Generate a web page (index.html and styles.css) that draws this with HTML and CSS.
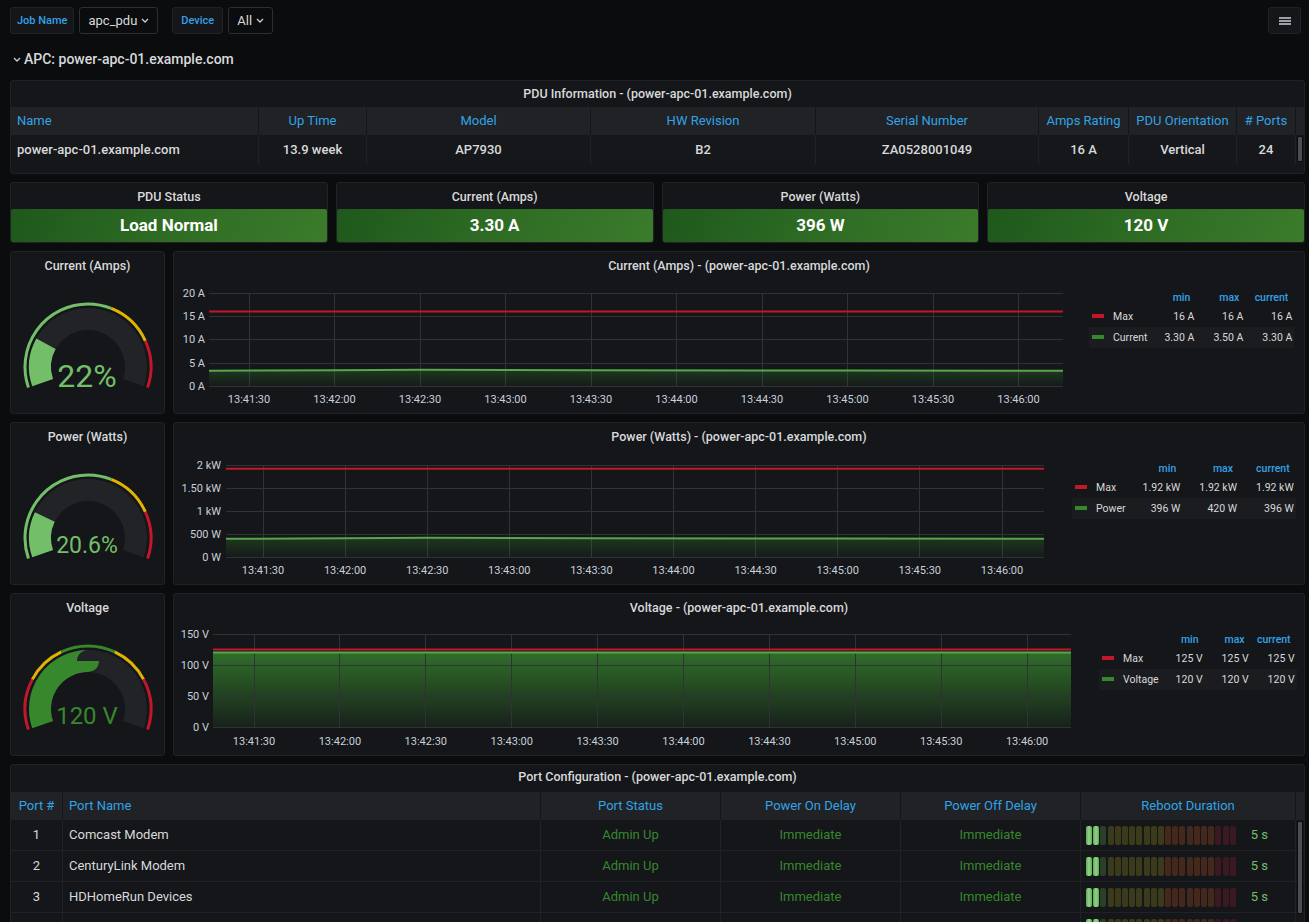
FILE: index.html
```html
<!DOCTYPE html>
<html lang="en">
<head>
<meta charset="utf-8">
<title>APC PDU</title>
<link rel="stylesheet" href="styles.css">
</head>
<body>
<div class="page">
  <div class="topbar">
    <div class="vars">
      <div class="var"><span class="var-label">Job Name</span><span class="var-value">apc_pdu <svg class="chev" width="8" height="5" viewBox="0 0 8 5"><path d="M1 1l3 3 3-3"/></svg></span></div>
      <div class="var"><span class="var-label wide">Device</span><span class="var-value">All <svg class="chev" width="8" height="5" viewBox="0 0 8 5"><path d="M1 1l3 3 3-3"/></svg></span></div>
    </div>
    <div class="menu-btn"><svg width="12" height="8" viewBox="0 0 12 8"><path d="M0 1h12M0 4h12M0 7h12"/></svg></div>
  </div>

  <div class="row-title"><svg class="chev" width="8" height="5" viewBox="0 0 8 5"><path d="M1 1l3 3 3-3"/></svg>APC: power-apc-01.example.com</div>

  <div class="panel info">
    <div class="panel-title t26">PDU Information - (power-apc-01.example.com)</div>
    <div class="tbl">
      <div class="tr th">
        <div class="c w-name left">Name</div>
        <div class="c w-up">Up Time</div>
        <div class="c w-model">Model</div>
        <div class="c w-hw">HW Revision</div>
        <div class="c w-serial">Serial Number</div>
        <div class="c w-amps">Amps Rating</div>
        <div class="c w-orient">PDU Orientation</div>
        <div class="c w-ports"># Ports</div>
      </div>
      <div class="tr td bold">
        <div class="c w-name left">power-apc-01.example.com</div>
        <div class="c w-up">13.9 week</div>
        <div class="c w-model">AP7930</div>
        <div class="c w-hw">B2</div>
        <div class="c w-serial">ZA0528001049</div>
        <div class="c w-amps">16 A</div>
        <div class="c w-orient">Vertical</div>
        <div class="c w-ports">24</div>
        <div class="scroll s1"></div>
      </div>
    </div>
  </div>

  <div class="stats">
    <div class="panel stat"><div class="stat-title">PDU Status</div><div class="stat-box">Load Normal</div></div>
    <div class="panel stat"><div class="stat-title">Current (Amps)</div><div class="stat-box">3.30 A</div></div>
    <div class="panel stat"><div class="stat-title">Power (Watts)</div><div class="stat-box">396 W</div></div>
    <div class="panel stat"><div class="stat-title">Voltage</div><div class="stat-box">120 V</div></div>
  </div>

  <!-- Current row -->
  <div class="metric-row">
    <div class="panel gauge-panel">
      <div class="panel-title">Current (Amps)</div>
      <svg class="gauge" width="153" height="134" viewBox="0 0 153 134">
        <path class="track" d="M31.62 103.63 A48 48 0 1 1 122.38 103.63"/>
        <path class="gfill light" pathLength="100" stroke-dasharray="22 300" d="M31.62 103.63 A48 48 0 1 1 122.38 103.63"/>
        <path class="ring" stroke="#73bf69" pathLength="100" stroke-dasharray="60 300" d="M17.43 108.51 A63 63 0 1 1 136.57 108.51"/>
        <path class="ring" stroke="#e0b400" pathLength="100" stroke-dasharray="0 60 20 300" d="M17.43 108.51 A63 63 0 1 1 136.57 108.51"/>
        <path class="ring" stroke="#c4162a" pathLength="100" stroke-dasharray="0 80 20 300" d="M17.43 108.51 A63 63 0 1 1 136.57 108.51"/>
        <text class="gval light-t" x="76" y="108" font-size="32">22%</text>
      </svg>
    </div>
    <div class="panel graph-panel">
      <div class="panel-title">Current (Amps) - (power-apc-01.example.com)</div>
      <div class="graph-body">
        <svg class="chart" width="915" height="134" viewBox="0 0 915 134">
          <defs>
            <linearGradient id="gf1" x1="0" y1="0" x2="0" y2="1"><stop offset="0" stop-color="#37872d" stop-opacity="0.3"/><stop offset="1" stop-color="#37872d" stop-opacity="0.04"/></linearGradient>
          </defs>
          <g class="grid">
            <path d="M35 14.5H889M35 37.5H889M35 60.5H889M35 84.5H889M35 107.5H889"/>
            <path d="M75.5 14V107M160.5 14V107M246.5 14V107M331.5 14V107M417.5 14V107M502.5 14V107M588.5 14V107M673.5 14V107M759.5 14V107M844.5 14V107"/>
          </g>
          <g class="ylab">
            <text x="31" y="18">20 A</text><text x="31" y="41">15 A</text><text x="31" y="64">10 A</text><text x="31" y="88">5 A</text><text x="31" y="111">0 A</text>
          </g>
          <polygon fill="url(#gf1)" points="35,91.7 160,91.2 246,90.8 417,91.2 673,91.5 889,91.7 889,107 35,107"/>
          <polyline class="s-green" points="35,91.7 160,91.2 246,90.8 417,91.2 673,91.5 889,91.7"/>
          <line class="s-red" x1="35" x2="889" y1="32.6" y2="32.6"/>
          <g class="xlab">
            <text x="75" y="124">13:41:30</text><text x="160.5" y="124">13:42:00</text><text x="246" y="124">13:42:30</text><text x="331.5" y="124">13:43:00</text><text x="417" y="124">13:43:30</text><text x="502.5" y="124">13:44:00</text><text x="588" y="124">13:44:30</text><text x="673.5" y="124">13:45:00</text><text x="759" y="124">13:45:30</text><text x="844.5" y="124">13:46:00</text>
          </g>
        </svg>
        <table class="legend">
          <tr class="lh"><th></th><th>min</th><th>max</th><th>current</th></tr>
          <tr><td class="ln"><i class="sw red"></i>Max</td><td>16 A</td><td>16 A</td><td>16 A</td></tr>
          <tr class="alt"><td class="ln"><i class="sw green"></i>Current</td><td>3.30 A</td><td>3.50 A</td><td>3.30 A</td></tr>
        </table>
      </div>
    </div>
  </div>

  <!-- Power row -->
  <div class="metric-row">
    <div class="panel gauge-panel">
      <div class="panel-title">Power (Watts)</div>
      <svg class="gauge" width="153" height="134" viewBox="0 0 153 134">
        <path class="track" d="M31.62 103.63 A48 48 0 1 1 122.38 103.63"/>
        <path class="gfill light" pathLength="100" stroke-dasharray="20.6 300" d="M31.62 103.63 A48 48 0 1 1 122.38 103.63"/>
        <path class="ring" stroke="#73bf69" pathLength="100" stroke-dasharray="60 300" d="M17.43 108.51 A63 63 0 1 1 136.57 108.51"/>
        <path class="ring" stroke="#e0b400" pathLength="100" stroke-dasharray="0 60 20 300" d="M17.43 108.51 A63 63 0 1 1 136.57 108.51"/>
        <path class="ring" stroke="#c4162a" pathLength="100" stroke-dasharray="0 80 20 300" d="M17.43 108.51 A63 63 0 1 1 136.57 108.51"/>
        <text class="gval light-t" x="76" y="103" font-size="23">20.6%</text>
      </svg>
    </div>
    <div class="panel graph-panel">
      <div class="panel-title">Power (Watts) - (power-apc-01.example.com)</div>
      <div class="graph-body">
        <svg class="chart" width="898" height="134" viewBox="0 0 898 134">
          <defs>
            <linearGradient id="gf2" x1="0" y1="0" x2="0" y2="1"><stop offset="0" stop-color="#37872d" stop-opacity="0.3"/><stop offset="1" stop-color="#37872d" stop-opacity="0.04"/></linearGradient>
          </defs>
          <g class="grid">
            <path d="M52 15.5H870M52 38.5H870M52 61.5H870M52 84.5H870M52 107.5H870"/>
            <path d="M89.5 15V107M171.5 15V107M253.5 15V107M335.5 15V107M417.5 15V107M499.5 15V107M581.5 15V107M663.5 15V107M745.5 15V107M828.5 15V107"/>
          </g>
          <g class="ylab">
            <text x="47" y="19">2 kW</text><text x="47" y="42">1.50 kW</text><text x="47" y="65">1 kW</text><text x="47" y="88">500 W</text><text x="47" y="111">0 W</text>
          </g>
          <polygon fill="url(#gf2)" points="52,88.8 171,88.3 253,87.8 417,88.2 663,88.6 870,88.8 870,107 52,107"/>
          <polyline class="s-green" points="52,88.8 171,88.3 253,87.8 417,88.2 663,88.6 870,88.8"/>
          <line class="s-red" x1="52" x2="870" y1="18.7" y2="18.7"/>
          <g class="xlab">
            <text x="89" y="124">13:41:30</text><text x="171.1" y="124">13:42:00</text><text x="253.2" y="124">13:42:30</text><text x="335.3" y="124">13:43:00</text><text x="417.4" y="124">13:43:30</text><text x="499.5" y="124">13:44:00</text><text x="581.6" y="124">13:44:30</text><text x="663.7" y="124">13:45:00</text><text x="745.8" y="124">13:45:30</text><text x="828" y="124">13:46:00</text>
          </g>
        </svg>
        <table class="legend">
          <tr class="lh"><th></th><th>min</th><th>max</th><th>current</th></tr>
          <tr><td class="ln"><i class="sw red"></i>Max</td><td>1.92 kW</td><td>1.92 kW</td><td>1.92 kW</td></tr>
          <tr class="alt"><td class="ln"><i class="sw green"></i>Power</td><td>396 W</td><td>420 W</td><td>396 W</td></tr>
        </table>
      </div>
    </div>
  </div>

  <!-- Voltage row -->
  <div class="metric-row">
    <div class="panel gauge-panel">
      <div class="panel-title">Voltage</div>
      <svg class="gauge" width="153" height="134" viewBox="0 0 153 134">
        <path class="track" d="M31.62 103.63 A48 48 0 1 1 122.38 103.63"/>
        <path class="gfill dark" pathLength="100" stroke-dasharray="50 300" d="M31.62 103.63 A48 48 0 1 1 122.38 103.63"/>
        <path class="ring" stroke="#c4162a" pathLength="100" stroke-dasharray="21.6 300" d="M17.43 108.51 A63 63 0 1 1 136.57 108.51"/>
        <path class="ring" stroke="#e0b400" pathLength="100" stroke-dasharray="0 21.6 16.9 300" d="M17.43 108.51 A63 63 0 1 1 136.57 108.51"/>
        <path class="ring" stroke="#37872d" pathLength="100" stroke-dasharray="0 38.5 23 300" d="M17.43 108.51 A63 63 0 1 1 136.57 108.51"/>
        <path class="ring" stroke="#e0b400" pathLength="100" stroke-dasharray="0 61.5 16.9 300" d="M17.43 108.51 A63 63 0 1 1 136.57 108.51"/>
        <path class="ring" stroke="#c4162a" pathLength="100" stroke-dasharray="0 78.4 21.6 300" d="M17.43 108.51 A63 63 0 1 1 136.57 108.51"/>
        <text class="gval dark-t" x="76" y="103" font-size="24">120 V</text>
      </svg>
    </div>
    <div class="panel graph-panel">
      <div class="panel-title">Voltage - (power-apc-01.example.com)</div>
      <div class="graph-body">
        <svg class="chart" width="925" height="134" viewBox="0 0 925 134">
          <defs>
            <linearGradient id="gf3" x1="0" y1="0" x2="0" y2="1"><stop offset="0" stop-color="#37872d" stop-opacity="0.78"/><stop offset="1" stop-color="#37872d" stop-opacity="0.1"/></linearGradient>
          </defs>
          <polygon fill="url(#gf3)" points="39,31.6 897,31.6 897,106 39,106"/>
          <g class="grid">
            <path d="M39 13.5H897M39 44.5H897M39 75.5H897M39 106.5H897"/>
            <path d="M80.5 13V106M165.5 13V106M251.5 13V106M337.5 13V106M423.5 13V106M509.5 13V106M595.5 13V106M681.5 13V106M767.5 13V106M853.5 13V106"/>
          </g>
          <g class="ylab">
            <text x="35" y="17">150 V</text><text x="35" y="48">100 V</text><text x="35" y="79">50 V</text><text x="35" y="110">0 V</text>
          </g>
          <line class="s-green" x1="39" x2="897" y1="31.6" y2="31.6"/>
          <line class="s-red" x1="39" x2="897" y1="28.5" y2="28.5"/>
          <g class="xlab">
            <text x="80" y="124">13:41:30</text><text x="165.9" y="124">13:42:00</text><text x="251.8" y="124">13:42:30</text><text x="337.7" y="124">13:43:00</text><text x="423.6" y="124">13:43:30</text><text x="509.5" y="124">13:44:00</text><text x="595.4" y="124">13:44:30</text><text x="681.3" y="124">13:45:00</text><text x="767.2" y="124">13:45:30</text><text x="853.1" y="124">13:46:00</text>
          </g>
        </svg>
        <table class="legend">
          <tr class="lh"><th></th><th>min</th><th>max</th><th>current</th></tr>
          <tr><td class="ln"><i class="sw red"></i>Max</td><td>125 V</td><td>125 V</td><td>125 V</td></tr>
          <tr class="alt"><td class="ln"><i class="sw green"></i>Voltage</td><td>120 V</td><td>120 V</td><td>120 V</td></tr>
        </table>
      </div>
    </div>
  </div>

  <div class="panel ports">
    <div class="panel-title t27">Port Configuration - (power-apc-01.example.com)</div>
    <div class="tbl">
      <div class="tr th">
        <div class="c p-num">Port #</div>
        <div class="c p-name left">Port Name</div>
        <div class="c p-mid">Port Status</div>
        <div class="c p-mid">Power On Delay</div>
        <div class="c p-mid">Power Off Delay</div>
        <div class="c p-reboot">Reboot Duration</div>
      </div>
      <div class="pbody">
        <div class="scroll s2"></div>
        <div class="tr prow">
          <div class="c p-num">1</div><div class="c p-name left">Comcast Modem</div>
          <div class="c p-mid ok">Admin Up</div><div class="c p-mid ok">Immediate</div><div class="c p-mid ok">Immediate</div>
          <div class="c p-reboot bar"><div class="lcd"><i class="l"></i><i class="l"></i><i class="dg"></i><i class="ol"></i><i class="ol"></i><i class="ol"></i><i class="ol"></i><i class="ol"></i><i class="ol"></i><i class="ol"></i><i class="ol"></i><i class="br"></i><i class="br"></i><i class="br"></i><i class="br"></i><i class="br"></i><i class="br"></i><i class="br"></i><i class="rd"></i><i class="rd"></i><i class="rd"></i></div><span class="bval">5 s</span></div>
        </div>
        <div class="tr prow">
          <div class="c p-num">2</div><div class="c p-name left">CenturyLink Modem</div>
          <div class="c p-mid ok">Admin Up</div><div class="c p-mid ok">Immediate</div><div class="c p-mid ok">Immediate</div>
          <div class="c p-reboot bar"><div class="lcd"><i class="l"></i><i class="l"></i><i class="dg"></i><i class="ol"></i><i class="ol"></i><i class="ol"></i><i class="ol"></i><i class="ol"></i><i class="ol"></i><i class="ol"></i><i class="ol"></i><i class="br"></i><i class="br"></i><i class="br"></i><i class="br"></i><i class="br"></i><i class="br"></i><i class="br"></i><i class="rd"></i><i class="rd"></i><i class="rd"></i></div><span class="bval">5 s</span></div>
        </div>
        <div class="tr prow">
          <div class="c p-num">3</div><div class="c p-name left">HDHomeRun Devices</div>
          <div class="c p-mid ok">Admin Up</div><div class="c p-mid ok">Immediate</div><div class="c p-mid ok">Immediate</div>
          <div class="c p-reboot bar"><div class="lcd"><i class="l"></i><i class="l"></i><i class="dg"></i><i class="ol"></i><i class="ol"></i><i class="ol"></i><i class="ol"></i><i class="ol"></i><i class="ol"></i><i class="ol"></i><i class="ol"></i><i class="br"></i><i class="br"></i><i class="br"></i><i class="br"></i><i class="br"></i><i class="br"></i><i class="br"></i><i class="rd"></i><i class="rd"></i><i class="rd"></i></div><span class="bval">5 s</span></div>
        </div>
        <div class="tr prow">
          <div class="c p-num"></div><div class="c p-name left"></div>
          <div class="c p-mid"></div><div class="c p-mid"></div><div class="c p-mid"></div>
          <div class="c p-reboot bar"><div class="lcd"><i class="l"></i><i class="l"></i><i class="dg"></i><i class="ol"></i><i class="ol"></i><i class="ol"></i><i class="ol"></i><i class="ol"></i><i class="ol"></i><i class="ol"></i><i class="ol"></i><i class="br"></i><i class="br"></i><i class="br"></i><i class="br"></i><i class="br"></i><i class="br"></i><i class="br"></i><i class="rd"></i><i class="rd"></i><i class="rd"></i></div></div>
        </div>
      </div>
    </div>
  </div>
</div>
</body>
</html>
```

FILE: styles.css
```css
html, body {
  margin: 0;
  height: 100%;
  overflow: hidden;
  background: #0b0c0e;
}
body {
  font-family: Roboto, "Liberation Sans", sans-serif;
  color: #d8d9da;
  font-size: 13px;
}
.page {
  padding: 0 4px 0 10px;
}

/* top bar */
.topbar {
  display: flex;
  justify-content: space-between;
  padding-top: 7px;
  height: 27px;
}
.vars { display: flex; gap: 14px; }
.var { display: flex; gap: 5px; }
.var-label, .var-value {
  height: 27px;
  box-sizing: border-box;
  display: flex;
  align-items: center;
  border-radius: 3px;
}
.var-label {
  padding: 0 6px;
  background: #141619;
  border: 1px solid #202226;
  color: #33a2e5;
  font-size: 11px;
  font-weight: 500;
}
.var-label.wide { padding: 0 8px; }
.var-value {
  padding: 0 8px 0 8px;
  border: 1px solid #2c2e33;
  color: #d8d9da;
  font-size: 13px;
  gap: 4px;
}
.chev path {
  fill: none;
  stroke: #c7d0d9;
  stroke-width: 1.3;
}
.menu-btn {
  width: 33px;
  height: 27px;
  box-sizing: border-box;
  margin-right: 4px;
  background: #141619;
  border: 1px solid #202226;
  border-radius: 3px;
  display: flex;
  align-items: center;
  justify-content: center;
}
.menu-btn path { stroke: #c7d0d9; stroke-width: 1.6; }

.row-title {
  height: 46px;
  box-sizing: border-box;
  padding: 16px 0 0 3px;
  line-height: 18px;
  font-size: 14px;
  font-weight: 500;
  color: #d8d9da;
  display: flex;
  align-items: flex-start;
  gap: 3px;
}
.row-title .chev { margin-top: 7px; }

/* panels */
.panel {
  background: #141619;
  border: 1px solid #202226;
  border-radius: 3px;
  box-sizing: border-box;
}
.panel-title {
  text-align: center;
  font-size: 12.5px;
  font-weight: 500;
  height: 27px;
  line-height: 27px;
  color: #d8d9da;
}
.panel-title.t26 { height: 26px; line-height: 25px; }
.panel-title.t27 { height: 26px; line-height: 24px; margin-bottom: 1px; }

/* tables */
.tbl { display: flex; flex-direction: column; }
.tr { display: flex; position: relative; }
.c {
  box-sizing: border-box;
  text-align: center;
  white-space: nowrap;
  overflow: hidden;
}
.c.left { text-align: left; padding-left: 6px; }
.th {
  background: #202226;
  height: 28px;
  line-height: 28px;
  color: #33a2e5;
}
.th .c { border-right: 1px solid #141619; }
.info { height: 94px; margin-bottom: 8px; }
.info .td { height: 30px; line-height: 29px; background: #16171a; }
.info .td .c { border-right: 1px solid #202226; }
.bold { font-weight: 500; }
.w-name { width: 248px; }
.w-up { width: 108px; }
.w-model { width: 224px; }
.w-hw { width: 225px; }
.w-serial { width: 223px; }
.w-amps { width: 90px; }
.w-orient { width: 108px; }
.w-ports { width: 59px; }

.scroll {
  position: absolute;
  width: 6px;
  background: #4b4d54;
  border: 1px solid #0b0c0e;
  border-radius: 2px;
  box-sizing: border-box;
}
.s1 { right: 1px; top: 1px; height: 26px; }
.s2 { right: 1px; top: 1px; height: 93px; z-index: 2; }

/* stats */
.stats {
  display: grid;
  grid-template-columns: repeat(4, 1fr);
  gap: 8px;
  margin-bottom: 8px;
}
.stat { height: 61px; display: flex; flex-direction: column; }
.stat-title {
  height: 26px;
  line-height: 27px;
  text-align: center;
  font-size: 12.5px;
  font-weight: 500;
}
.stat-box {
  height: 33px;
  line-height: 33px;
  text-align: center;
  font-size: 17px;
  font-weight: 700;
  color: #fff;
  border-radius: 2px;
  background: linear-gradient(110deg, #1f581c 0%, #2e6c24 50%, #3b7b2b 100%);
}

/* metric rows */
.metric-row {
  display: flex;
  gap: 8px;
  height: 163px;
  margin-bottom: 8px;
}
.gauge-panel { width: 155px; flex: none; }
.graph-panel { flex: 1; }
.gauge { display: block; }
.gauge .track { fill: none; stroke: #222327; stroke-width: 22; }
.gauge .gfill { fill: none; stroke-width: 22; }
.gauge .gfill.light { stroke: #73bf69; }
.gauge .gfill.dark { stroke: #37872d; }
.gauge .ring { fill: none; stroke-width: 3; }
.gval { text-anchor: middle; font-family: Roboto, "Liberation Sans", sans-serif; }
.light-t { fill: #73bf69; }
.dark-t { fill: #37872d; }

.graph-body { display: flex; align-items: flex-start; }
.chart { display: block; flex: none; }
.chart .grid path { stroke: #303236; stroke-width: 1; fill: none; }
.chart text {
  fill: #c7d0d9;
  font-size: 11px;
  font-family: Roboto, "Liberation Sans", sans-serif;
}
.chart .ylab text { text-anchor: end; }
.chart .xlab text { text-anchor: middle; }
.s-green { fill: none; stroke: #56a64b; stroke-width: 2; }
.s-red { stroke: #c4162a; stroke-width: 2; }

.legend {
  border-collapse: collapse;
  margin-top: 9px;
  font-size: 10.5px;
  color: #d8d9da;
}
.legend th {
  height: 18px;
  padding: 0 6px 0 0;
  text-align: right;
  color: #33a2e5;
  font-weight: 500;
}
.legend td {
  height: 21px;
  padding: 0 2px 0 17px;
  text-align: right;
  white-space: nowrap;
}
.legend td.ln { text-align: left; padding: 0 0 0 3px; }
.legend tr.alt td { background: #1b1c20; }
.sw {
  display: inline-block;
  width: 12px;
  height: 4px;
  margin-right: 9px;
  vertical-align: middle;
  position: relative;
  top: -1px;
}
.sw.red { background: #c4162a; }
.sw.green { background: #37872d; }

/* port table */
.ports { height: 400px; }
.pbody { position: relative; }
.prow {
  height: 31px;
  line-height: 30px;
  border-bottom: 1px solid #202226;
  box-sizing: border-box;
  background: #141619;
}
.prow .c { border-right: 1px solid #202226; }
.p-num { width: 52px; }
.p-name { width: 478px; }
.p-mid { width: 180px; }
.p-reboot { width: 215px; }
.ok { color: #37872d; }
.bar {
  display: flex;
  align-items: center;
  padding-left: 5px;
  gap: 15px;
}
.lcd { display: flex; gap: 1.2px; height: 19px; }
.lcd i {
  width: 6px;
  height: 19px;
  border-radius: 2px;
  display: block;
}
.lcd .l { background: linear-gradient(90deg, #5fa857, #8fd585 50%, #5fa857); }
.lcd .dg { background: #2a3f28; }
.lcd .ol { background: #3b3a1a; }
.lcd .br { background: #43281b; }
.lcd .rd { background: #3a1a20; }
.bval { color: #73bf69; font-size: 13px; }
```
